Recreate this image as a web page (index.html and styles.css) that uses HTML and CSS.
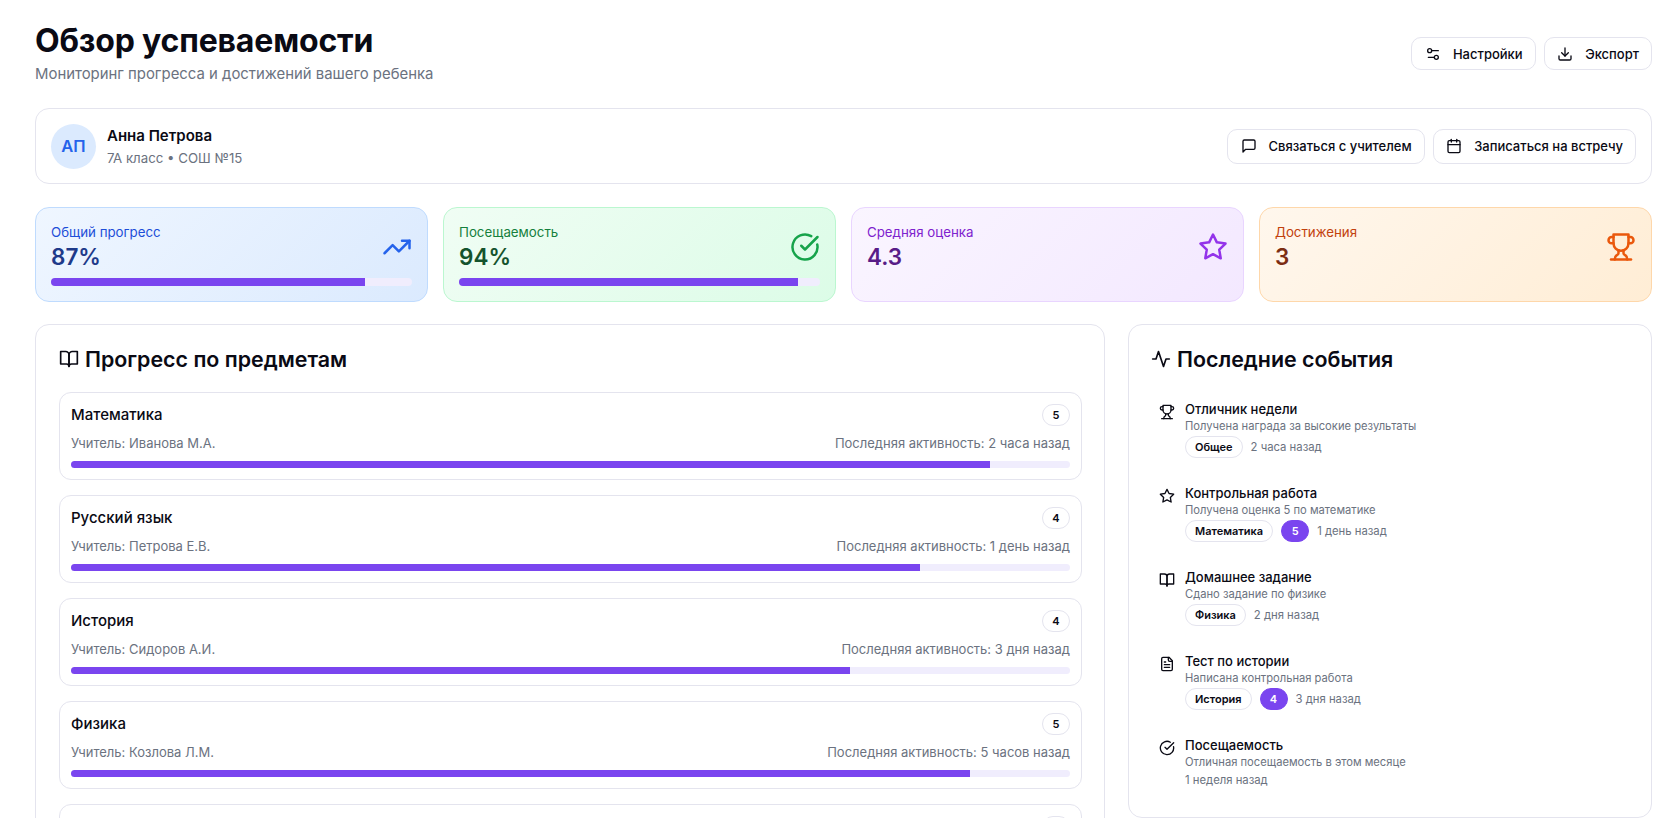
FILE: index.html
```html
<!DOCTYPE html>
<html lang="ru">
<head>
  <meta charset="UTF-8" />
  <title>Обзор успеваемости</title>
  <link rel="stylesheet" href="styles.css">
</head>
<body>
  <svg class="sprite" aria-hidden="true">
    <symbol id="i-settings" viewBox="0 0 24 24"><path d="M20 7h-9"/><path d="M14 17H5"/><circle cx="17" cy="17" r="3"/><circle cx="7" cy="7" r="3"/></symbol>
    <symbol id="i-download" viewBox="0 0 24 24"><path d="M21 15v4a2 2 0 0 1-2 2H5a2 2 0 0 1-2-2v-4"/><polyline points="7 10 12 15 17 10"/><line x1="12" y1="15" x2="12" y2="3"/></symbol>
    <symbol id="i-message" viewBox="0 0 24 24"><path d="M21 15a2 2 0 0 1-2 2H7l-4 4V5a2 2 0 0 1 2-2h14a2 2 0 0 1 2 2z"/></symbol>
    <symbol id="i-calendar" viewBox="0 0 24 24"><rect x="3" y="4" width="18" height="18" rx="2"/><line x1="16" y1="2" x2="16" y2="6"/><line x1="8" y1="2" x2="8" y2="6"/><line x1="3" y1="10" x2="21" y2="10"/></symbol>
    <symbol id="i-trending" viewBox="0 0 24 24"><polyline points="22 7 13.5 15.5 8.5 10.5 2 17"/><polyline points="16 7 22 7 22 13"/></symbol>
    <symbol id="i-check" viewBox="0 0 24 24"><path d="M21.801 10A10 10 0 1 1 17 3.335"/><path d="m9 11 3 3L22 4"/></symbol>
    <symbol id="i-star" viewBox="0 0 24 24"><polygon points="12 2 15.09 8.26 22 9.27 17 14.14 18.18 21.02 12 17.77 5.82 21.02 7 14.14 2 9.27 8.91 8.26 12 2"/></symbol>
    <symbol id="i-trophy" viewBox="0 0 24 24"><path d="M6 9H4.5a2.5 2.5 0 0 1 0-5H6"/><path d="M18 9h1.5a2.5 2.5 0 0 0 0-5H18"/><path d="M4 22h16"/><path d="M10 14.66V17c0 .55-.47.98-.97 1.21C7.85 18.75 7 20.24 7 22"/><path d="M14 14.66V17c0 .55.47.98.97 1.21C16.15 18.75 17 20.24 17 22"/><path d="M18 2H6v7a6 6 0 0 0 12 0V2Z"/></symbol>
    <symbol id="i-book" viewBox="0 0 24 24"><path d="M2 3h6a4 4 0 0 1 4 4v14a3 3 0 0 0-3-3H2z"/><path d="M22 3h-6a4 4 0 0 0-4 4v14a3 3 0 0 1 3-3h7z"/></symbol>
    <symbol id="i-activity" viewBox="0 0 24 24"><path d="M22 12h-4l-3 9L9 3l-3 9H2"/></symbol>
    <symbol id="i-file" viewBox="0 0 24 24"><path d="M15 2H6a2 2 0 0 0-2 2v16a2 2 0 0 0 2 2h12a2 2 0 0 0 2-2V7Z"/><path d="M14 2v4a2 2 0 0 0 2 2h4"/><path d="M10 9H8"/><path d="M16 13H8"/><path d="M16 17H8"/></symbol>
  </svg>

  <div class="page">
    <header class="page-header">
      <div>
        <h1>Обзор успеваемости</h1>
        <p class="subtitle">Мониторинг прогресса и достижений вашего ребенка</p>
      </div>
      <div class="actions">
        <button class="btn"><svg class="icon"><use href="#i-settings"/></svg>Настройки</button>
        <button class="btn"><svg class="icon"><use href="#i-download"/></svg>Экспорт</button>
      </div>
    </header>

    <section class="card student">
      <div class="student-info">
        <div class="avatar">АП</div>
        <div>
          <div class="student-name">Анна Петрова</div>
          <div class="student-class">7А класс • СОШ №15</div>
        </div>
      </div>
      <div class="actions">
        <button class="btn btn-tall"><svg class="icon"><use href="#i-message"/></svg>Связаться с учителем</button>
        <button class="btn btn-tall"><svg class="icon"><use href="#i-calendar"/></svg>Записаться на встречу</button>
      </div>
    </section>

    <section class="stats">
      <div class="stat stat-blue">
        <div class="stat-top">
          <div>
            <div class="stat-label">Общий прогресс</div>
            <div class="stat-value">87%</div>
          </div>
          <svg class="stat-icon"><use href="#i-trending"/></svg>
        </div>
        <div class="bar stat-bar"><div class="bar-fill" style="width: 87%"></div></div>
      </div>
      <div class="stat stat-green">
        <div class="stat-top">
          <div>
            <div class="stat-label">Посещаемость</div>
            <div class="stat-value">94%</div>
          </div>
          <svg class="stat-icon"><use href="#i-check"/></svg>
        </div>
        <div class="bar stat-bar"><div class="bar-fill" style="width: 94%"></div></div>
      </div>
      <div class="stat stat-purple">
        <div class="stat-top">
          <div>
            <div class="stat-label">Средняя оценка</div>
            <div class="stat-value">4.3</div>
          </div>
          <svg class="stat-icon"><use href="#i-star"/></svg>
        </div>
      </div>
      <div class="stat stat-orange">
        <div class="stat-top">
          <div>
            <div class="stat-label">Достижения</div>
            <div class="stat-value">3</div>
          </div>
          <svg class="stat-icon"><use href="#i-trophy"/></svg>
        </div>
      </div>
    </section>

    <div class="columns">
      <section class="card panel panel-subjects">
        <h2><svg class="icon icon-title"><use href="#i-book"/></svg>Прогресс по предметам</h2>
        <div class="subjects">
          <div class="subject">
            <div class="subject-row">
              <span class="subject-name">Математика</span>
              <span class="badge">5</span>
            </div>
            <div class="subject-row subject-meta">
              <span>Учитель: Иванова М.А.</span>
              <span>Последняя активность: 2 часа назад</span>
            </div>
            <div class="bar"><div class="bar-fill" style="width: 92%"></div></div>
          </div>
          <div class="subject">
            <div class="subject-row">
              <span class="subject-name">Русский язык</span>
              <span class="badge">4</span>
            </div>
            <div class="subject-row subject-meta">
              <span>Учитель: Петрова Е.В.</span>
              <span>Последняя активность: 1 день назад</span>
            </div>
            <div class="bar"><div class="bar-fill" style="width: 85%"></div></div>
          </div>
          <div class="subject">
            <div class="subject-row">
              <span class="subject-name">История</span>
              <span class="badge">4</span>
            </div>
            <div class="subject-row subject-meta">
              <span>Учитель: Сидоров А.И.</span>
              <span>Последняя активность: 3 дня назад</span>
            </div>
            <div class="bar"><div class="bar-fill" style="width: 78%"></div></div>
          </div>
          <div class="subject">
            <div class="subject-row">
              <span class="subject-name">Физика</span>
              <span class="badge">5</span>
            </div>
            <div class="subject-row subject-meta">
              <span>Учитель: Козлова Л.М.</span>
              <span>Последняя активность: 5 часов назад</span>
            </div>
            <div class="bar"><div class="bar-fill" style="width: 90%"></div></div>
          </div>
          <div class="subject">
            <div class="subject-row subject-row-end">
              <span class="badge"></span>
            </div>
          </div>
        </div>
      </section>

      <section class="card panel">
        <h2><svg class="icon icon-title"><use href="#i-activity"/></svg>Последние события</h2>
        <div class="events">
          <div class="event">
            <svg class="icon event-icon"><use href="#i-trophy"/></svg>
            <div>
              <div class="event-title">Отличник недели</div>
              <div class="event-text">Получена награда за высокие результаты</div>
              <div class="event-meta"><span class="badge">Общее</span><span>2 часа назад</span></div>
            </div>
          </div>
          <div class="event">
            <svg class="icon event-icon"><use href="#i-star"/></svg>
            <div>
              <div class="event-title">Контрольная работа</div>
              <div class="event-text">Получена оценка 5 по математике</div>
              <div class="event-meta"><span class="badge">Математика</span><span class="badge badge-grade">5</span><span>1 день назад</span></div>
            </div>
          </div>
          <div class="event">
            <svg class="icon event-icon"><use href="#i-book"/></svg>
            <div>
              <div class="event-title">Домашнее задание</div>
              <div class="event-text">Сдано задание по физике</div>
              <div class="event-meta"><span class="badge">Физика</span><span>2 дня назад</span></div>
            </div>
          </div>
          <div class="event">
            <svg class="icon event-icon"><use href="#i-file"/></svg>
            <div>
              <div class="event-title">Тест по истории</div>
              <div class="event-text">Написана контрольная работа</div>
              <div class="event-meta"><span class="badge">История</span><span class="badge badge-grade">4</span><span>3 дня назад</span></div>
            </div>
          </div>
          <div class="event">
            <svg class="icon event-icon"><use href="#i-check"/></svg>
            <div>
              <div class="event-title">Посещаемость</div>
              <div class="event-text">Отличная посещаемость в этом месяце</div>
              <div class="event-meta"><span>1 неделя назад</span></div>
            </div>
          </div>
        </div>
      </section>
    </div>
  </div>
</body>
</html>
```

FILE: styles.css
```css
html,
body {
  height: 100%;
  overflow: hidden;
}

body {
  margin: 0;
  background: #fff;
  color: #0a0a14;
  font-family: Inter, sans-serif;
}

.sprite {
  display: none;
}

.page {
  padding: 23px 14px 0 35px;
}

.icon,
.stat-icon {
  fill: none;
  stroke: currentColor;
  stroke-width: 2;
  stroke-linecap: round;
  stroke-linejoin: round;
  flex-shrink: 0;
}

.icon {
  width: 16px;
  height: 16px;
}

/* Page header */
.page-header {
  display: flex;
  justify-content: space-between;
  align-items: center;
  margin-bottom: 24px;
}

h1 {
  margin: 0;
  font-size: 32px;
  line-height: 36px;
  font-weight: 700;
  letter-spacing: -0.18px;
}

.subtitle {
  margin: 5px 0 0;
  font-size: 14.9px;
  line-height: 20px;
  color: #6b7280;
}

.actions {
  display: flex;
  gap: 8px;
}

.btn {
  display: flex;
  align-items: center;
  gap: 12px;
  height: 33px;
  padding: 0 12px 0 12.5px;
  background: #fff;
  border: 1px solid #e4e4ee;
  border-radius: 10px;
  color: #0a0a14;
  font-family: inherit;
  font-size: 13px;
  font-weight: 500;
}

.btn-tall {
  height: 35px;
}

.card {
  background: #fff;
  border: 1px solid #e4e4ee;
  border-radius: 14px;
}

/* Student */
.student {
  display: flex;
  justify-content: space-between;
  align-items: center;
  height: 76px;
  box-sizing: border-box;
  padding: 0 15px;
  margin-bottom: 23px;
}

.student-info {
  display: flex;
  align-items: center;
  gap: 11px;
}

.avatar {
  display: flex;
  align-items: center;
  justify-content: center;
  width: 45px;
  height: 45px;
  border-radius: 50%;
  background: #dbeafe;
  color: #2563eb;
  font-size: 16.5px;
  font-weight: 600;
}

.student-name {
  font-size: 15px;
  line-height: 20px;
  font-weight: 600;
}

.student-class {
  margin-top: 4px;
  font-size: 13.25px;
  line-height: 16px;
  color: #6b7280;
}

/* Stat cards */
.stats {
  display: grid;
  grid-template-columns: repeat(4, 1fr);
  gap: 15px;
  margin-bottom: 22px;
}

.stat {
  height: 95px;
  box-sizing: border-box;
  padding: 15px 15px;
  border: 1px solid;
  border-radius: 14px;
}

.stat-top {
  display: flex;
  justify-content: space-between;
  align-items: center;
}

.stat-label {
  font-size: 13.3px;
  line-height: 18px;
}

.stat-value {
  font-size: 22.5px;
  line-height: 32px;
  font-weight: 600;
}

.stat-icon {
  width: 30px;
  height: 30px;
  margin-bottom: 3px;
}

.stat-blue {
  background: linear-gradient(135deg, #eff6ff, #dbeafe);
  border-color: #bfdbfe;
}

.stat-blue .stat-label {
  color: #1d4ed8;
}

.stat-blue .stat-icon {
  color: #2563eb;
}

.stat-blue .stat-value {
  color: #1e3a8a;
}

.stat-green {
  background: linear-gradient(135deg, #f0fdf4, #dcfce7);
  border-color: #bbf7d0;
}

.stat-green .stat-label {
  color: #15803d;
}

.stat-green .stat-icon {
  color: #16a34a;
}

.stat-green .stat-value {
  color: #14532d;
}

.stat-purple {
  background: linear-gradient(135deg, #faf5ff, #f3e8ff);
  border-color: #e9d5ff;
}

.stat-purple .stat-label {
  color: #7e22ce;
}

.stat-purple .stat-icon {
  color: #9333ea;
}

.stat-purple .stat-value {
  color: #581c87;
}

.stat-orange {
  background: linear-gradient(135deg, #fff7ed, #ffedd5);
  border-color: #fed7aa;
}

.stat-orange .stat-label {
  color: #c2410c;
}

.stat-orange .stat-icon {
  color: #ea580c;
}

.stat-orange .stat-value {
  color: #7c2d12;
}

.bar {
  height: 7px;
  background: #f0edfd;
  border-radius: 4px;
  overflow: hidden;
}

.bar-fill {
  height: 100%;
  background: #7a45ef;
}

.stat-bar {
  height: 8px;
  margin-top: 5px;
}

/* Panels */
.columns {
  display: grid;
  grid-template-columns: 1070px 524px;
  gap: 23px;
  align-items: start;
}

.panel {
  padding: 20px 22px 29px;
}

.panel-subjects {
  padding-left: 23px;
}

h2 {
  display: flex;
  align-items: center;
  gap: 6px;
  margin: 0 0 19px;
  font-size: 21.4px;
  line-height: 28px;
  font-weight: 600;
}

.icon-title {
  width: 20px;
  height: 20px;
}

.subjects {
  display: flex;
  flex-direction: column;
  gap: 15px;
}

.subject {
  height: 88px;
  box-sizing: border-box;
  padding: 11px;
  border: 1px solid #e4e4ee;
  border-radius: 12px;
}

.subject-row {
  display: flex;
  justify-content: space-between;
  align-items: center;
}

.subject-row-end {
  justify-content: flex-end;
}

.subject-name {
  padding-bottom: 1px;
  font-size: 15px;
  font-weight: 500;
}

.subject-meta {
  margin: 7px 0 8px;
  font-size: 13px;
  line-height: 20px;
  color: #6b7280;
}

.badge {
  display: inline-flex;
  align-items: center;
  justify-content: center;
  min-width: 28px;
  height: 22px;
  box-sizing: border-box;
  padding: 0 9px;
  border: 1px solid #e4e4ee;
  border-radius: 11px;
  color: #0a0a14;
  font-size: 11px;
  font-weight: 600;
}

.badge-grade {
  background: #7a45ef;
  border-color: #7a45ef;
  color: #fff;
}

/* Events */
.events {
  display: flex;
  flex-direction: column;
  gap: 26px;
  padding: 8px 7px 0 8px;
}

.event {
  display: flex;
  align-items: flex-start;
  gap: 10px;
}

.event-icon {
  margin-top: 4px;
}

.event-title {
  font-size: 13px;
  line-height: 18px;
  font-weight: 500;
}

.event-text {
  font-size: 11.2px;
  line-height: 16px;
  color: #6b7280;
}

.event-meta {
  display: flex;
  align-items: center;
  gap: 8px;
  margin-top: 2px;
  font-size: 11.3px;
  line-height: 16px;
  color: #6b7280;
}
```
